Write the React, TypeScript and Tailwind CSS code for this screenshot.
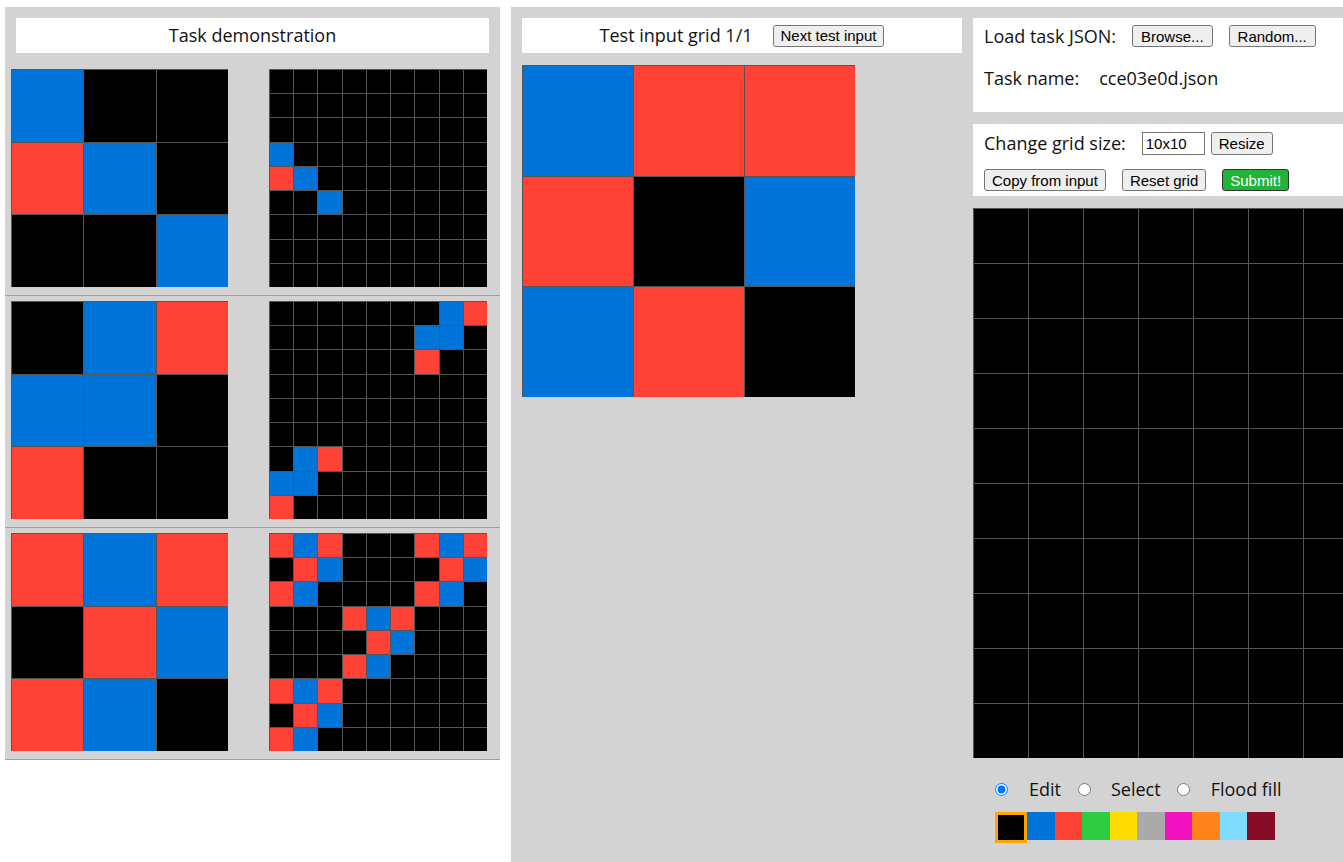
const COLORS = [
  "bg-[#000000]",
  "bg-[#0074D9]",
  "bg-[#FF4136]",
  "bg-[#2ECC40]",
  "bg-[#FFDC00]",
  "bg-[#AAAAAA]",
  "bg-[#F012BE]",
  "bg-[#FF851B]",
  "bg-[#7FDBFF]",
  "bg-[#870C25]",
];

const COLS: Record<number, string> = {
  3: "grid-cols-3",
  9: "grid-cols-9",
  10: "grid-cols-10",
};

// the task: every red cell of the input gets a copy of the input in its block
function expand(input: number[][]) {
  const out = Array.from({ length: 9 }, () => Array(9).fill(0));
  input.forEach((row, i) =>
    row.forEach((v, j) => {
      if (v !== 2) return;
      input.forEach((r2, a) =>
        r2.forEach((v2, b) => {
          out[i * 3 + a][j * 3 + b] = v2;
        })
      );
    })
  );
  return out;
}

const trainInputs = [
  [
    [1, 0, 0],
    [2, 1, 0],
    [0, 0, 1],
  ],
  [
    [0, 1, 2],
    [1, 1, 0],
    [2, 0, 0],
  ],
  [
    [2, 1, 2],
    [0, 2, 1],
    [2, 1, 0],
  ],
];

const testInput = [
  [1, 2, 2],
  [2, 0, 1],
  [1, 2, 0],
];

const blank = Array.from({ length: 10 }, () => Array(10).fill(0));

function Grid({ data, className }: { data: number[][]; className: string }) {
  return (
    <div className={`grid gap-px bg-[#555555] pt-px pl-px shrink-0 ${COLS[data[0].length]} ${className}`}>
      {data.flat().map((v, i) => (
        <div key={i} className={COLORS[v]} />
      ))}
    </div>
  );
}

function Btn({ children, className = "" }: { children: string; className?: string }) {
  return (
    <button className={`h-[22px] px-[7px] border border-[#767676] bg-[#efefef] rounded-[3px] text-[15px] leading-none text-black font-['Liberation_Sans',Arial,sans-serif] ${className}`}>
      {children}
    </button>
  );
}

export default function App() {
  const swatches = [0, 1, 2, 3, 4, 5, 6, 7, 8, 9];

  return (
    <div className="w-[1343px] h-[862px] overflow-hidden bg-white flex items-start font-['Open_Sans',sans-serif] text-[18px] text-[#111]">

      {/* demonstration */}
      <div className="ml-[5px] mt-[7px] w-[495px] bg-[#d3d3d3] shrink-0">
        <div className="mx-[11px] mt-[11px] h-[35px] bg-white flex items-center justify-center">
          Task demonstration
        </div>
        <div className="mt-[11px]">
          {trainInputs.map((inp, k) => (
            <div key={k} className="flex pl-[6px] pt-[5px] pb-[8px] border-b border-[#a0a0a0]">
              <Grid data={inp} className="w-[217px] h-[218px]" />
              <Grid data={expand(inp)} className="ml-[41px] w-[218px] h-[218px]" />
            </div>
          ))}
        </div>
      </div>

      {/* evaluation */}
      <div className="ml-[11px] h-[862px] mt-[7px] flex-1 min-w-0 bg-[#d3d3d3] flex pt-[11px]">

        <div className="pl-[11px] w-[451px] shrink-0">
          <div className="h-[35px] bg-white flex items-center justify-center gap-[20px]">
            <span>Test input grid 1/1</span>
            <Btn>Next test input</Btn>
          </div>
          <Grid data={testInput} className="mt-[12px] w-[333px] h-[332px]" />
        </div>

        <div className="ml-[11px] flex-1 min-w-0 overflow-hidden">
          <div className="h-[94px] bg-white pl-[11px] pt-[7px]">
            <div className="flex items-center h-[22px]">
              <span>Load task JSON:</span>
              <Btn className="ml-[16px] px-[8px]">Browse...</Btn>
              <Btn className="ml-[16px] px-[8px]">Random...</Btn>
            </div>
            <div className="flex items-center mt-[18px]">
              <span>Task name:</span>
              <span className="ml-[20px]">cce03e0d.json</span>
            </div>
          </div>

          <div className="mt-[12px] h-[72px] bg-white pl-[11px] pt-[8px]">
            <div className="flex items-center h-[23px]">
              <span>Change grid size:</span>
              <input
                defaultValue="10x10"
                className="ml-[16px] w-[63px] h-[23px] border border-[#767676] px-[3px] text-[15px] text-black bg-white font-['Liberation_Sans',Arial,sans-serif]"
              />
              <Btn className="ml-[6px] h-[23px]">Resize</Btn>
            </div>
            <div className="flex items-center mt-[14px]">
              <Btn>Copy from input</Btn>
              <Btn className="ml-[16px]">Reset grid</Btn>
              <button className="ml-[16px] h-[22px] px-[7px] border border-[#333] bg-[#22b33a] rounded-[3px] text-[15px] leading-none text-white font-['Liberation_Sans',Arial,sans-serif]">
                Submit!
              </button>
            </div>
          </div>

          <Grid data={blank} className="mt-[12px] w-[550px] h-[550px]" />

          <div className="flex items-center pl-[22px] mt-[20px] h-[22px]">
            <input type="radio" name="mode" defaultChecked className="m-0 w-[13px] h-[13px]" />
            <span className="ml-[21px]">Edit</span>
            <input type="radio" name="mode" className="ml-[17px] m-0 w-[13px] h-[13px]" />
            <span className="ml-[20px]">Select</span>
            <input type="radio" name="mode" className="ml-[16px] m-0 w-[13px] h-[13px]" />
            <span className="ml-[21px]">Flood fill</span>
          </div>

          <div className="flex items-start pl-[22px] mt-[12px]">
            {swatches.map((c) =>
              c === 0 ? (
                <div key={c} className="w-[32px] h-[31px] border-[3px] border-[#FFA500] bg-black" />
              ) : (
                <div key={c} className={`w-[27.5px] h-[28px] ${COLORS[c]}`} />
              )
            )}
          </div>
        </div>
      </div>
    </div>
  );
}
